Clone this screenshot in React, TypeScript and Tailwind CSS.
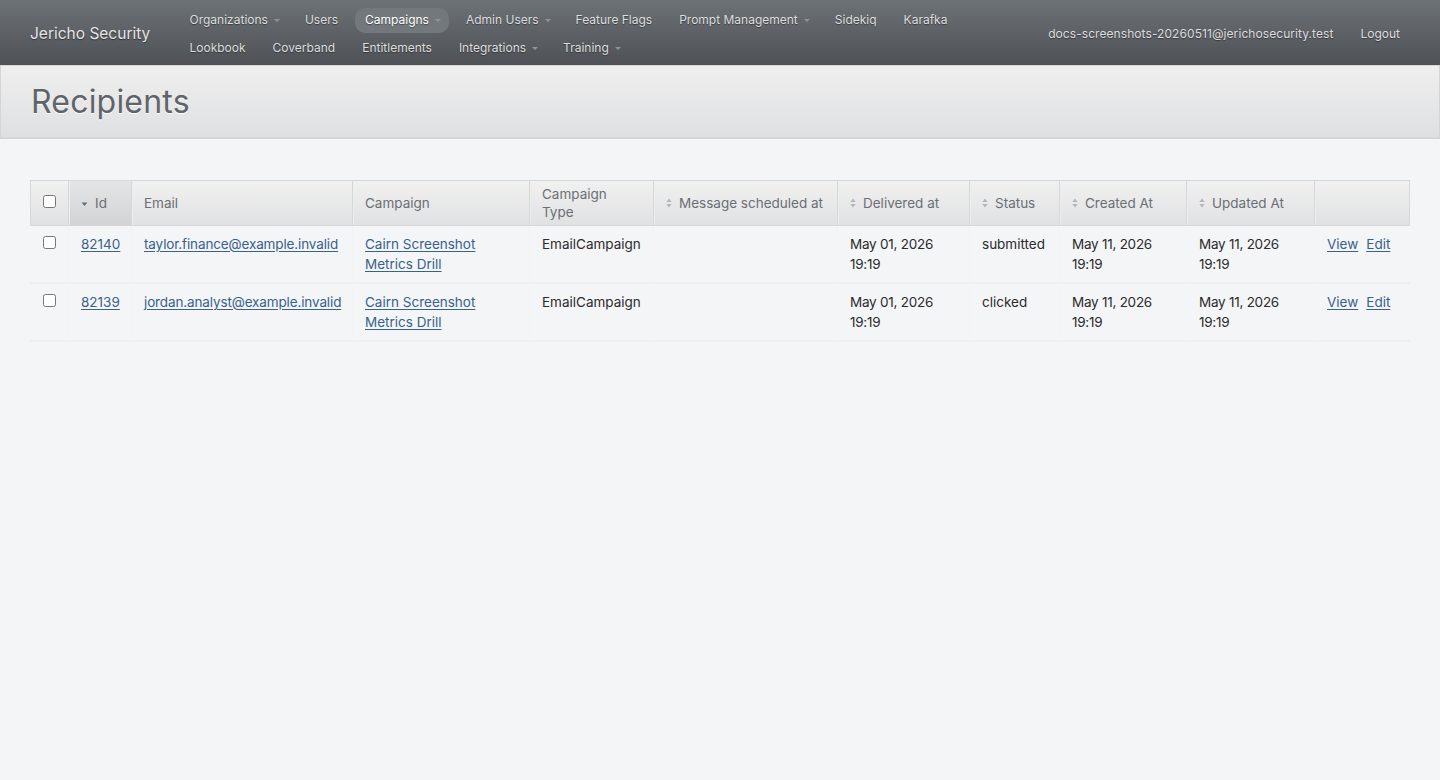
const navRows = [
  [
    { label: "Organizations", caret: true },
    { label: "Users" },
    { label: "Campaigns", caret: true, active: true },
    { label: "Admin Users", caret: true },
    { label: "Feature Flags" },
    { label: "Prompt Management", caret: true },
    { label: "Sidekiq" },
    { label: "Karafka" },
  ],
  [
    { label: "Lookbook" },
    { label: "Coverband" },
    { label: "Entitlements" },
    { label: "Integrations", caret: true },
    { label: "Training", caret: true },
  ],
];

const columns = [
  { label: "Id", width: "w-[63px]", sort: "desc" },
  { label: "Email", width: "w-[221px]" },
  { label: "Campaign", width: "w-[177px]" },
  { label: "Campaign Type", width: "w-[124px]" },
  { label: "Message scheduled at", width: "w-[184px]", sort: "both" },
  { label: "Delivered at", width: "w-[132px]", sort: "both" },
  { label: "Status", width: "w-[90px]", sort: "both" },
  { label: "Created At", width: "w-[127px]", sort: "both" },
  { label: "Updated At", width: "w-[128px]", sort: "both" },
];

const recipients = [
  {
    id: "82140",
    email: "taylor.finance@example.invalid",
    delivered: "May 01, 2026 19:19",
    status: "submitted",
    created: "May 11, 2026 19:19",
    updated: "May 11, 2026 19:19",
  },
  {
    id: "82139",
    email: "jordan.analyst@example.invalid",
    delivered: "May 01, 2026 19:19",
    status: "clicked",
    created: "May 11, 2026 19:19",
    updated: "May 11, 2026 19:19",
  },
];

const linkClass = "text-[#38618c] underline underline-offset-[2px]";
const cellClass = "border-b-2 border-l border-b-[#edeeef] border-l-[#f2f3f5] px-[12px] pt-[8px]";
const dateClass = `${cellClass} tracking-[-0.25px]`;
const navText = "text-[12px] [text-shadow:0_1px_1px_rgba(0,0,0,0.4)]";

function Caret() {
  return <span className="mr-[-2px] ml-[6px] inline-block h-0 w-0 border-x-[3px] border-t-[3px] border-x-transparent border-t-[#8f9498]" />;
}

function SortIcon({ sort }: { sort: string }) {
  if (sort === "desc") {
    return (
      <svg width="7" height="12" viewBox="0 0 7 12" className="mr-[7px] inline-block">
        <path d="M0.5 4.5h6L3.5 8z" fill="#6b6f73" />
      </svg>
    );
  }
  return (
    <svg width="6" height="12" viewBox="0 0 6 12" className="mr-[7px] inline-block -translate-y-[1px]">
      <path d="M0.3 5L3 1.5l2.7 3.5zM0.3 7L3 10.5l2.7-3.5z" fill="#b4b7ba" />
    </svg>
  );
}

const App = () => {
  return (
    <div className="min-h-[780px] bg-[#f4f5f7] font-['Inter',sans-serif] text-[13.5px] text-[#2b2b2b]">
      {/* top bar */}
      <header className="flex h-[65px] items-center bg-gradient-to-b from-[#6d7276] to-[#4e5256] pt-[2px] pr-10 pl-[30px]">
        <div className="w-[149.5px] text-[15.5px] text-[#e4e5e6] [text-shadow:0_1px_1px_rgba(0,0,0,0.5)]">Jericho Security</div>
        <nav className="flex flex-1 flex-col gap-[3px] pt-[1px]">
          {navRows.map((row, i) => (
            <div key={i} className="flex h-[25px] items-center gap-[7px]">
              {row.map((item) => (
                <a
                  key={item.label}
                  className={`flex h-[25px] items-center rounded-[10px] px-[10px] ${navText} ${
                    item.active ? "bg-[#73787d] text-white" : "text-[#dcdddf]"
                  }`}
                >
                  {item.label}
                  {item.caret && <Caret />}
                </a>
              ))}
            </div>
          ))}
        </nav>
        <a className={`tracking-[0.07px] text-[#dcdddf] ${navText}`}>docs-screenshots-20260511@jerichosecurity.test</a>
        <a className={`ml-[27px] text-[#dcdddf] ${navText}`}>Logout</a>
      </header>

      {/* title */}
      <div className="flex h-[74px] items-center border border-b-2 border-[#d3d5d7] bg-gradient-to-b from-[#efefef] to-[#dfe0e2] pl-[30px]">
        <h1 className="text-[32px] font-normal tracking-[0.2px] text-[#5f6468] [text-shadow:0_1px_0_#fff]">Recipients</h1>
      </div>

      <main className="px-[30px] pt-[41px]">
        <table className="w-[1380px] table-fixed border-separate border-spacing-0">
          <thead>
            <tr className="h-[46px] bg-gradient-to-b from-[#f1f1f1] to-[#e0e1e3] text-left text-[#6b6f73]">
              <th className="w-[38px] border-y border-l border-[#d5d7d9] px-[12px] font-normal">
                <input type="checkbox" className="block h-[13px] w-[13px] -translate-y-[2px]" />
              </th>
              {columns.map((col) => (
                <th
                  key={col.label}
                  className={`${col.width} border-y border-l border-[#d5d7d9] px-[12px] leading-[18px] font-normal [box-shadow:inset_1px_0_0_#eeeeef] ${
                    col.sort === "desc" ? "bg-gradient-to-b from-[#e4e5e6] to-[#d2d3d5]" : ""
                  }`}
                >
                  {col.sort && <SortIcon sort={col.sort} />}
                  {col.label}
                </th>
              ))}
              <th className="w-[96px] border border-[#d5d7d9] [box-shadow:inset_1px_0_0_#eeeeef]" />
            </tr>
          </thead>
          <tbody>
            {recipients.map((r) => (
              <tr key={r.id} className="h-[58px] align-top leading-[20px]">
                <td className="border-b-2 border-[#edeeef] px-[13px] pt-[10px]">
                  <input type="checkbox" className="block h-[13px] w-[13px]" />
                </td>
                <td className={cellClass}><a className={linkClass}>{r.id}</a></td>
                <td className={`${cellClass} tracking-[-0.13px]`}><a className={linkClass}>{r.email}</a></td>
                <td className={cellClass}><a className={linkClass}>Cairn Screenshot Metrics Drill</a></td>
                <td className={cellClass}>EmailCampaign</td>
                <td className={cellClass} />
                <td className={dateClass}>{r.delivered}</td>
                <td className={cellClass}>{r.status}</td>
                <td className={dateClass}>{r.created}</td>
                <td className={dateClass}>{r.updated}</td>
                <td className={cellClass}>
                  <a className={linkClass}>View</a>
                  <a className={`${linkClass} ml-[8px]`}>Edit</a>
                </td>
              </tr>
            ))}
          </tbody>
        </table>
      </main>
    </div>
  );
};

export default App;
